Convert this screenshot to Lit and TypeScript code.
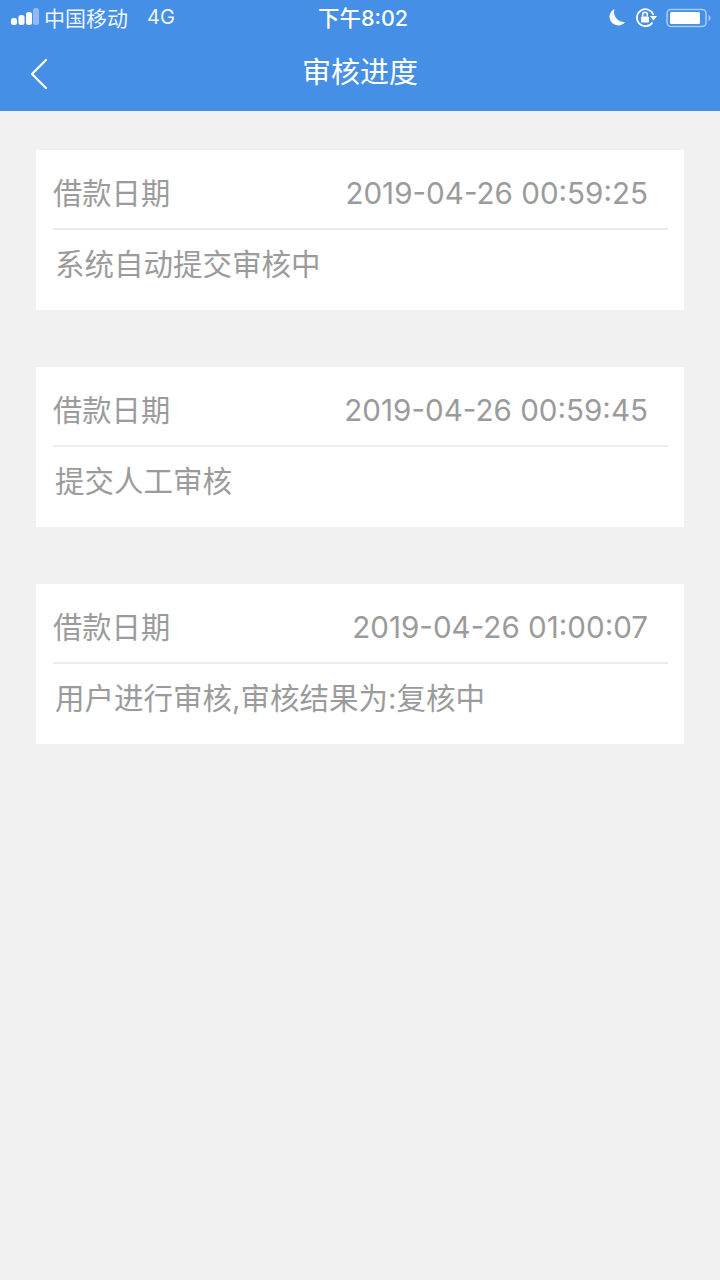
import { LitElement, html, css } from "lit";
import { customElement } from "lit/decorators.js";

const items = [
  { date: "2019-04-26 00:59:25", text: "系统自动提交审核中" },
  { date: "2019-04-26 00:59:45", text: "提交人工审核" },
  { date: "2019-04-26 01:00:07", text: "用户进行审核,审核结果为:复核中" },
];

@customElement("app-root")
export class AppRoot extends LitElement {
  static styles = css`
    :host {
      display: block;
      width: 720px;
      height: 1280px;
      background: #f1f1f1;
      font-family: "Inter", "Noto Sans CJK SC", sans-serif;
      overflow: hidden;
    }
    .top {
      background: #4590e6;
      height: 111px;
      color: #fff;
      display: flex;
      flex-direction: column;
    }
    .status {
      height: 35px;
      display: grid;
      grid-template-columns: 1fr auto 1fr;
      align-items: center;
      padding: 0 9px 0 11px;
      box-sizing: border-box;
    }
    .left { display: flex; align-items: center; }
    .carrier { font-size: 21px; margin-left: 5px; color: #eef5fd; margin-bottom: 2px; }
    .net { font-size: 20px; margin-left: 19px; color: #eef5fd; margin-bottom: 2px; }
    .clock { font-size: 21.5px; font-weight: 500; margin-left: 4px; margin-bottom: 2px; }
    .right { display: flex; align-items: center; justify-content: flex-end; gap: 9px; }
    .nav {
      flex: 1;
      display: flex;
      align-items: center;
      justify-content: center;
      position: relative;
      padding-bottom: 6px;
    }
    .back { position: absolute; left: 29px; top: 23px; }
    .title { font-size: 29px; }
    .list {
      display: flex;
      flex-direction: column;
      gap: 57px;
      padding: 39px 36px 0;
    }
    .card {
      background: #fff;
      height: 160px;
      padding: 0 16px 0 17px;
      box-sizing: border-box;
      color: #9b9b9b;
    }
    .row {
      height: 80px;
      border-bottom: 2px solid #ececec;
      box-sizing: border-box;
      display: flex;
      justify-content: space-between;
      align-items: center;
      padding-top: 7px;
      padding-right: 20px;
    }
    .label { font-size: 29.3px; margin-bottom: 4px; }
    .date { font-size: 29.6px; }
    .text { font-size: 29.5px; padding: 16px 0 0 2px; line-height: 36px; }
  `;

  render() {
    return html`
      <div class="top">
        <div class="status">
          <div class="left">
            <svg width="28" height="20" viewBox="0 0 28 20">
              <rect x="0" y="10" width="6" height="7" rx="2.5" fill="#fff" />
              <rect x="7.5" y="7" width="6" height="10" rx="2.5" fill="#fff" />
              <rect x="15" y="4" width="6" height="13" rx="2.5" fill="#fff" />
              <rect x="22" y="0" width="6" height="17" rx="2.5" fill="#8fbcf0" />
            </svg>
            <span class="carrier">中国移动</span>
            <span class="net">4G</span>
          </div>
          <div class="clock">下午8:02</div>
          <div class="right">
            <svg width="18" height="20" viewBox="0 0 18 20">
              <path d="M6.5 1 A8.6 8.6 0 1 0 17 14 A10 10 0 0 1 6.5 1 Z" fill="#fff" />
            </svg>
            <svg width="22" height="22" viewBox="0 0 22 22" fill="none">
              <path d="M17.5 15.5 A8.5 8.5 0 1 1 18.5 8" stroke="#fff" stroke-width="1.8" />
              <path d="M15 9 L22 9 L18.5 13.5 Z" fill="#fff" />
              <rect x="6" y="9.5" width="8" height="6" rx="1" fill="#fff" />
              <path d="M7.7 9.5 V7.5 A2.3 2.3 0 0 1 12.3 7.5 V9.5" stroke="#fff" stroke-width="1.5" />
            </svg>
            <svg width="45" height="20" viewBox="0 0 45 20" fill="none">
              <rect x="1" y="1.5" width="39" height="17" rx="4" stroke="#a5c9f3" stroke-width="1.6" />
              <rect x="4" y="4" width="30" height="12" rx="1.5" fill="#fff" />
              <path d="M42.5 7 C44 7.5 44.5 8.5 44.5 10 C44.5 11.5 44 12.5 42.5 13 Z" fill="#a5c9f3" />
            </svg>
          </div>
        </div>
        <div class="nav">
          <svg class="back" width="20" height="32" viewBox="0 0 20 32" fill="none">
            <path d="M17 2 L3 16 L17 30" stroke="#fff" stroke-width="2.3" stroke-linecap="round" stroke-linejoin="round" />
          </svg>
          <span class="title">审核进度</span>
        </div>
      </div>
      <div class="list">
        ${items.map(
          (i) => html`
            <div class="card">
              <div class="row">
                <span class="label">借款日期</span>
                <span class="date">${i.date}</span>
              </div>
              <div class="text">${i.text}</div>
            </div>
          `
        )}
      </div>
    `;
  }
}
